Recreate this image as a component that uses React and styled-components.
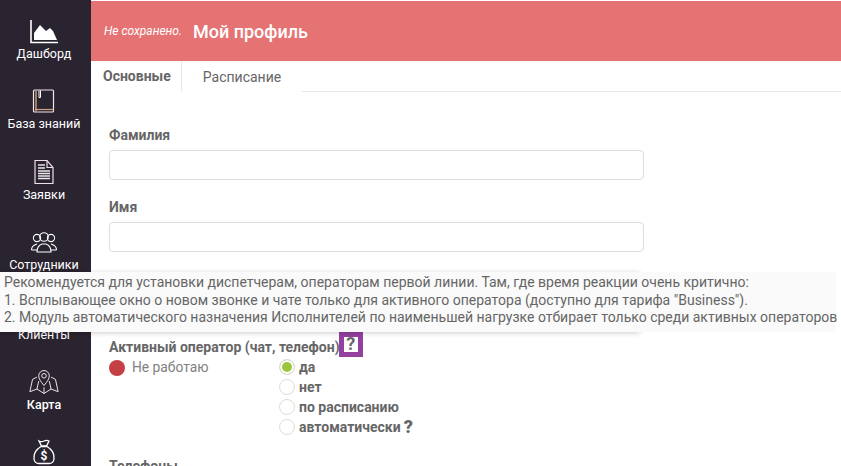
import React from "react";
import styled, { createGlobalStyle } from "styled-components";

const Global = createGlobalStyle`
    html, body {
        margin: 0;
        padding: 0;
        background: #fff;
        font-family: Roboto, "Liberation Sans", sans-serif;
        overflow: hidden;
    }
    * { box-sizing: border-box; }
`;

const Page = styled.div`
    position: relative;
    display: flex;
    width: 841px;
    height: 466px;
    overflow: hidden;
`;

const Sidebar = styled.nav`
    width: 91px;
    flex-shrink: 0;
    background: #2a2330;
    display: flex;
    flex-direction: column;
    padding: 16px 3px 0 0;
`;

const NavItem = styled.div`
    height: 70.3px;
    flex-shrink: 0;
    display: flex;
    flex-direction: column;
    align-items: center;
    color: #fff;
    font-size: 12.5px;
    line-height: 14px;
    font-weight: ${(p) => (p.$bold ? 500 : 400)};

    svg {
        display: block;
        width: 30px;
        height: 30px;
        margin-bottom: 1px;
    }
    span { white-space: nowrap; }
`;

const Main = styled.main`
    flex: 1;
    min-width: 0;
    padding-top: 1px;
`;

const Banner = styled.header`
    height: 60px;
    background: #e57373;
    display: flex;
    align-items: center;
    padding-left: 13px;
    color: #fff;
`;

const Unsaved = styled.i`
    font-size: 12px;
    margin-right: 11px;
`;

const Heading = styled.h1`
    margin: 0;
    font-size: 18px;
    font-weight: 500;
`;

const Tabs = styled.div`
    height: 31px;
    display: flex;
    border-bottom: 1px solid #e6e6e6;
`;

const Tab = styled.div`
    height: 31px;
    padding: 0 ${(p) => (p.$active ? "10px" : "21px")} 0 ${(p) => (p.$active ? "12px" : "21px")};
    display: flex;
    align-items: center;
    font-size: 14px;
    color: #666;
    font-weight: ${(p) => (p.$active ? 700 : 400)};
    background: #fff;
    border-right: ${(p) => (p.$active ? "1px solid #e6e6e6" : "none")};
    border-bottom: ${(p) => (p.$active ? "1px solid #fff" : "none")};
`;

const Form = styled.div`
    padding: 35px 0 0 18px;
`;

const Label = styled.div`
    font-size: 14px;
    line-height: 16px;
    min-height: 16px;
    font-weight: 700;
    color: #666;
    margin-bottom: 7px;
`;

const Input = styled.div`
    width: 535px;
    height: 30px;
    border: 1px solid #ddd;
    border-radius: 4px;
    background: #fff;
    margin-bottom: 19px;
`;

const ActiveLabel = styled(Label)`
    margin-top: -4px;
`;

const ActiveRow = styled.div`
    display: flex;
    margin-top: -7px;
`;

const Status = styled.div`
    width: 170px;
    display: flex;
    align-items: flex-start;
    font-size: 13.8px;
    line-height: 20px;
    color: #808080;
`;

const Dot = styled.span`
    width: 16px;
    height: 16px;
    border-radius: 50%;
    background: #c44045;
    margin: 3px 7px 0 0;
`;

const Radios = styled.div`
    display: flex;
    flex-direction: column;
`;

const RadioRow = styled.div`
    height: 20px;
    display: flex;
    align-items: center;
    font-size: 14px;
    font-weight: 700;
    color: #666;
`;

const Radio = styled.span`
    width: 16px;
    height: 16px;
    border-radius: 50%;
    border: 1px solid #ddd;
    margin-right: 4px;
    background: ${(p) => (p.$checked ? "#9bc53d" : "#fff")};
    box-shadow: ${(p) => (p.$checked ? "inset 0 0 0 2px #fff" : "none")};
`;

const Question = styled.b`
    font-size: 18px;
    line-height: 20px;
    color: #666;
    margin-left: 3px;
`;

const QuestionBox = styled.span`
    display: inline-block;
    width: 24px;
    height: 25px;
    border: 5px solid #93409f;
    background: #fff;
    margin: -8px 0 0 -1px;
    vertical-align: middle;
    font-size: 18px;
    line-height: 14px;
    text-align: center;
`;

const Tip = styled.div`
    position: absolute;
    left: 0;
    top: 272px;
    width: 640px;
    height: 60px;
    box-shadow: 0 1px 5px rgba(0, 0, 0, 0.2);
`;

const TipText = styled.div`
    width: 836px;
    height: 60px;
    background: #fafafa;
    padding: 2px 0 0 4px;
    font-size: 14px;
    line-height: 17.5px;
    color: #666;
    white-space: nowrap;
`;

const NextLabel = styled(Label)`
    margin-top: 21px;
`;

const Dash = () => (
    <svg viewBox="0 0 30 30" fill="none">
        <path d="M2 4v22.5h27" stroke="#fff" strokeWidth="1.6" />
        <path d="M5 24v-7l6-8 6 6 4-3 3 3 4 9z" fill="#fff" />
    </svg>
);

const Book = () => (
    <svg viewBox="0 0 30 30" fill="none">
        <rect x="4.5" y="4" width="20" height="22" rx="1" stroke="#f0e6ee" strokeWidth="1.2" />
        <path d="M7 4.5v21" stroke="#d2a27a" strokeWidth="1.4" />
        <path d="M10 4.5v7h1.5v-7" stroke="#fff" strokeWidth="1" />
        <path d="M6 23.5h18.5" stroke="#d2a27a" strokeWidth="1.2" />
    </svg>
);

const Doc = () => (
    <svg viewBox="0 0 30 30" fill="none">
        <path d="M6 3.5h12l6 7v16H6z" stroke="#f0dfe8" strokeWidth="1.2" />
        <path d="M18 3.5v7h6" stroke="#f0dfe8" strokeWidth="1.2" />
        <path d="M9 8h7M9 11h7M9 14h12M9 16.5h12M9 19h12M9 21.5h12" stroke="#e9e9e9" strokeWidth="1.3" />
    </svg>
);

const Team = () => (
    <svg viewBox="0 0 30 30" fill="none" stroke="#fff" strokeWidth="1.1">
        <circle cx="8" cy="11" r="3.6" />
        <circle cx="22" cy="11" r="3.6" />
        <circle cx="15" cy="10" r="4.3" />
        <path d="M2.5 23c0-3 2-5 5.5-6M27.5 23c0-3-2-5-5.5-6" />
        <path d="M2.5 23H8M22 23h5.5" />
        <path d="M8 25c0-4 2-7 5-8h4c3 1 5 4 5 8z" />
    </svg>
);

const Client = () => (
    <svg viewBox="0 0 30 30" fill="none" stroke="#fff" strokeWidth="1.2">
        <circle cx="15" cy="10" r="5" />
        <path d="M5 25c0-6 4-9 10-9s10 3 10 9z" />
    </svg>
);

const MapPin = () => (
    <svg viewBox="1 0 34 30" fill="none" stroke="#f3e9ea" strokeWidth="1.1">
        <path d="M18 19c-4-5-6-7.5-6-11a6 6 0 0 1 12 0c0 3.5-2 6-6 11z" />
        <circle cx="18" cy="8" r="2.6" />
        <path d="M10 9.5 5 12 2 26l8-3 8 5 8-5 8 3-3-14-5-2.5" />
        <path d="M10 23l2-9M26 23l-2-9M18 28v-7" />
    </svg>
);

const Bag = () => (
    <svg viewBox="0 0 30 30" fill="none" stroke="#fff" strokeWidth="1.3">
        <path d="M10 3c2 1 3 1 5 0s3-1 5 0l-2.5 5h-5z" />
        <path d="M12 8.5h6c5 3 7.5 8 7 12.5-.4 3-2.5 4.5-5 4.5H10c-2.5 0-4.600-1.500-5-4.500-.5-4.500 2-9.500 7-12.500z" />
        <text x="15" y="21.5" textAnchor="middle" fontSize="12" fontWeight="700" fill="#fff" stroke="none" fontFamily="Roboto">$</text>
    </svg>
);

const items = [
    { label: "Дашборд", icon: Dash },
    { label: "База знаний", icon: Book },
    { label: "Заявки", icon: Doc },
    { label: "Сотрудники", icon: Team },
    { label: "Клиенты", icon: Client },
    { label: "Карта", icon: MapPin, bold: true },
    { icon: Bag },
];

export default function App() {
    return (
        <Page>
            <Global />
            <Sidebar>
                {items.map((item, i) => (
                    <NavItem key={i} $bold={item.bold}>
                        <item.icon />
                        {item.label && <span>{item.label}</span>}
                    </NavItem>
                ))}
            </Sidebar>
            <Main>
                <Banner>
                    <Unsaved>Не сохранено.</Unsaved>
                    <Heading>Мой профиль</Heading>
                </Banner>
                <Tabs>
                    <Tab $active>Основные</Tab>
                    <Tab>Расписание</Tab>
                </Tabs>
                <Form>
                    <Label>Фамилия</Label>
                    <Input />
                    <Label>Имя</Label>
                    <Input />
                    <Label />
                    <Input />
                    <ActiveLabel>
                        Активный оператор (чат, телефон)<QuestionBox>?</QuestionBox>
                    </ActiveLabel>
                    <ActiveRow>
                        <Status>
                            <Dot />
                            Не работаю
                        </Status>
                        <Radios>
                            <RadioRow><Radio $checked />да</RadioRow>
                            <RadioRow><Radio />нет</RadioRow>
                            <RadioRow><Radio />по расписанию</RadioRow>
                            <RadioRow><Radio />автоматически<Question>?</Question></RadioRow>
                        </Radios>
                    </ActiveRow>
                    <NextLabel>Телефоны</NextLabel>
                </Form>
            </Main>
            <Tip>
                <TipText>
                    Рекомендуется для установки диспетчерам, операторам первой линии. Там, где время реакции очень критично:
                    <br />
                    1. Всплывающее окно о новом звонке и чате только для активного оператора (доступно для тарифа "Business").
                    <br />
                    2. Модуль автоматического назначения Исполнителей по наименьшей нагрузке отбирает только среди активных операторов
                </TipText>
            </Tip>
        </Page>
    );
}
